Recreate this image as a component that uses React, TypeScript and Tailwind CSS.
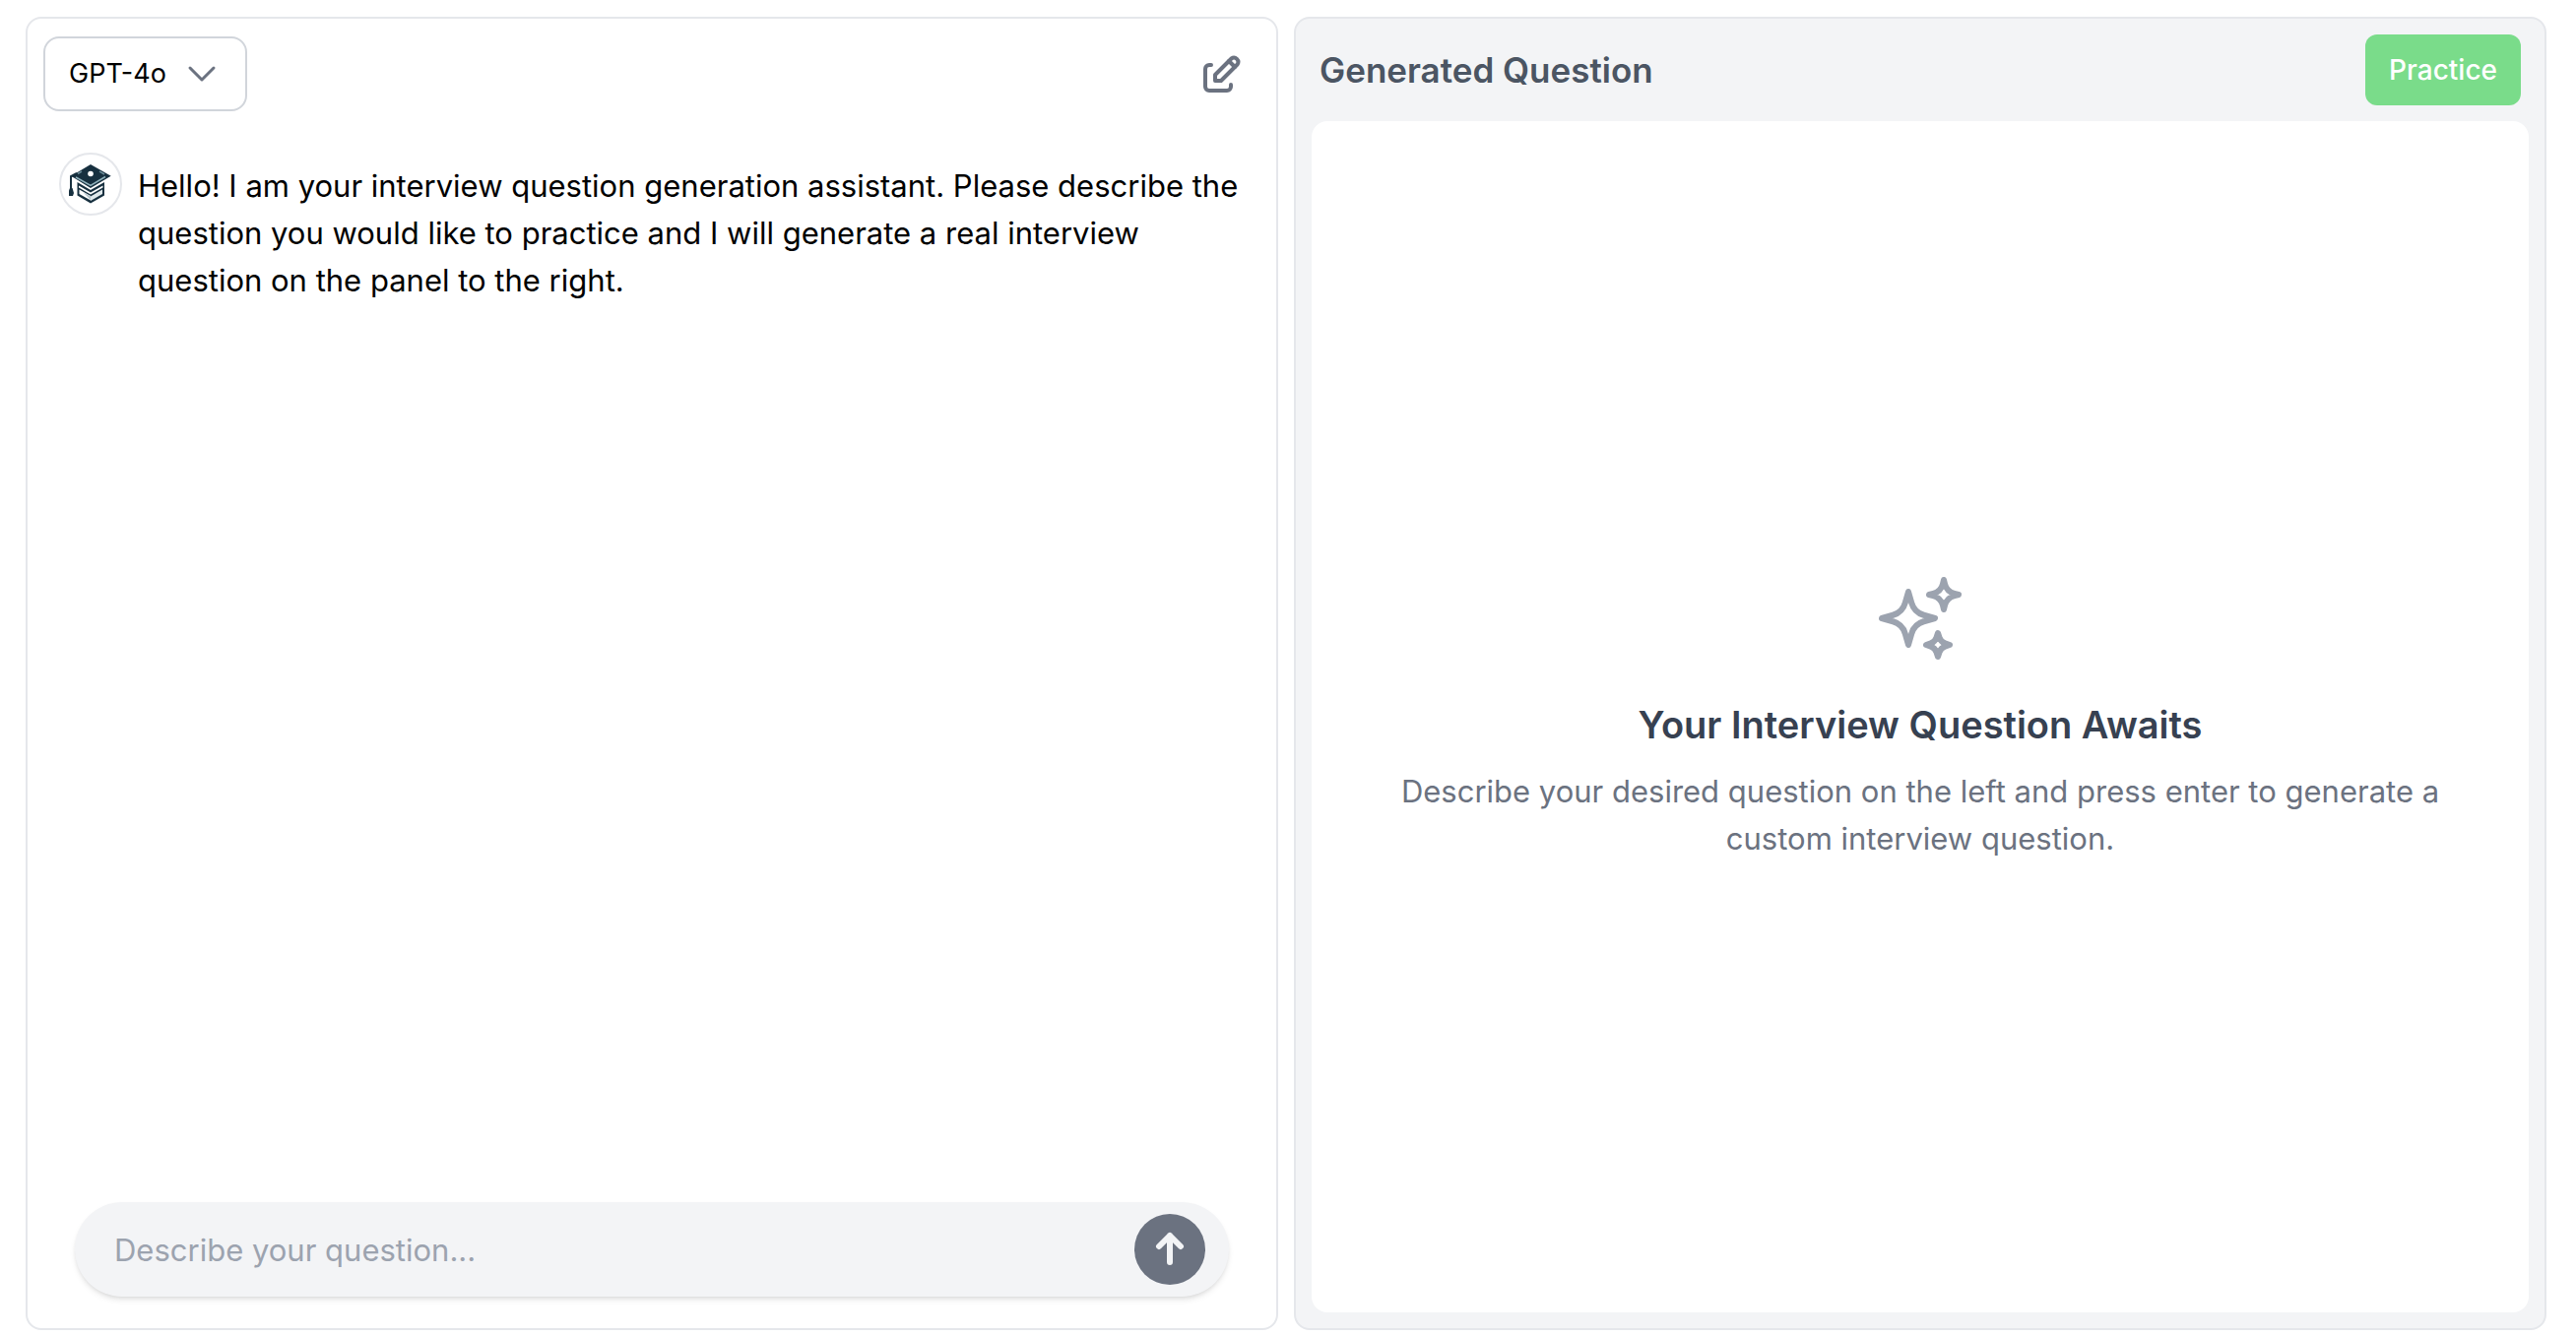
import { HiOutlineSparkles } from "react-icons/hi2";

function ChevronDown() {
  return (
    <svg width="32" height="32" viewBox="0 0 32 32" fill="none" stroke="#6b7280" strokeWidth="3" strokeLinecap="round" strokeLinejoin="round" aria-hidden="true">
      <path d="M4 10 L16 22 L28 10" />
    </svg>
  );
}

function EditIcon() {
  return (
    <svg width="38" height="38" viewBox="0 0 38 38" fill="none" stroke="#6b7280" strokeWidth="4" strokeLinecap="round" strokeLinejoin="round" aria-hidden="true">
      <path d="M8 10H6a4 4 0 0 0-4 4v18a4 4 0 0 0 4 4h18a4 4 0 0 0 4-4v-2" />
      <path d="M12 26v-6L28.500 3.500a4.300 4.300 0 0 1 6 6L18 26Z" />
      <path d="M26 6l6 6" />
    </svg>
  );
}

function CapLogo() {
  return (
    <svg width="44" height="40" viewBox="0 0 44 40" aria-hidden="true">
      <path d="M8.500 18l13.500 8 14-8v13.500L22 39.500 8.500 31.500z" fill="#17303f" />
      <path d="M10 21.500l12 7 12.500-7v2L22 30.500l-12-7z" fill="#ffffff" />
      <path d="M10.500 25.500L22 32v4.500l-11.500-6.500z" fill="#ffffff" />
      <path d="M34 25.500L22 32.500v4.500l12-7z" fill="#dfe8eb" />
      <path d="M14 28l8 4.500v3.500z" fill="#b4c5cc" />
      <path d="M22 0l20.700 11.800L22 24 5 13.500 2 12z" fill="#17303f" />
      <path d="M7 13L22 21.500 37 12.500" fill="none" stroke="#8fb0ba" strokeWidth="1.500" />
      <path d="M9 9.500l4-2.300M31 7.200l5 2.800" fill="none" stroke="#6d8d9a" strokeWidth="1.500" />
      <path d="M2 26V12l6-3" fill="none" stroke="#17303f" strokeWidth="2" />
      <path d="M1 24h2.500l1.500 5-1 3H0l-1-3z" fill="#17303f" />
      <circle cx="22" cy="9.500" r="2.800" fill="#ffffff" />
    </svg>
  );
}

function ArrowUp() {
  return (
    <svg width="40" height="40" viewBox="0 0 40 40" fill="none" stroke="#f3f4f6" strokeWidth="6" strokeLinecap="round" strokeLinejoin="round" aria-hidden="true">
      <path d="M20 33V6M9 17L20 6l11 11" />
    </svg>
  );
}

export default function App() {
  return (
    <main className="grid h-screen grid-cols-2 gap-4 bg-white pt-[17px] pr-[30px] pb-1.5 pl-[26px] font-['Inter',sans-serif] text-[31px] leading-[48px] text-black">
      <section className="flex flex-col rounded-2xl border-2 border-[#e5e7eb] bg-white">
        <header className="flex items-center justify-between pt-[18px] pr-9 pl-4">
          <button type="button" className="flex h-[76px] items-center gap-5 rounded-2xl border-2 border-[#d1d5db] pr-7 pl-6 text-[27px] leading-10">
            GPT-4o
            <ChevronDown />
          </button>
          <button type="button" aria-label="New conversation">
            <EditIcon />
          </button>
        </header>
        <div className="flex flex-1 items-start gap-4 px-8 pt-[42px]">
          <div className="flex size-16 shrink-0 items-center justify-center rounded-full border-2 border-[#e5e7eb]">
            <CapLogo />
          </div>
          <p className="pt-2.5">
            Hello! I am your interview question generation assistant. Please describe the question you would like to practice and I will generate a real interview question on the panel to the right.
          </p>
        </div>
        <form className="mx-12 mb-8 flex h-24 items-center rounded-full bg-[#f3f4f6] pr-6 pl-10 shadow-md" onSubmit={(e) => e.preventDefault()}>
          <input type="text" aria-label="Describe your question" placeholder="Describe your question..." className="min-w-0 flex-1 bg-transparent pt-0.5 outline-none placeholder:text-[#9ca3af]" />
          <button type="submit" aria-label="Send" className="flex size-[72px] items-center justify-center rounded-full bg-[#6b7280]">
            <ArrowUp />
          </button>
        </form>
      </section>
      <section className="flex flex-col gap-4 rounded-2xl border-2 border-[#e5e7eb] bg-[#f3f4f6] p-4">
        <header className="flex items-center justify-between px-2">
          <h1 className="text-[35px] leading-[56px] font-semibold text-[#4b5563]">Generated Question</h1>
          <button type="button" className="h-[72px] rounded-xl bg-[#7adc8a] px-6 text-[28px] leading-10 font-medium text-white">Practice</button>
        </header>
        <div className="flex flex-1 flex-col items-center justify-center rounded-2xl bg-white px-16 text-center">
          <HiOutlineSparkles className="mb-8 size-24 text-[#9ca3af]" aria-hidden="true" />
          <h2 className="mb-4 text-[38px] leading-[56px] font-semibold text-[#374151]">Your Interview Question Awaits</h2>
          <p className="text-[#6b7280]">Describe your desired question on the left and press enter to generate a custom interview question.</p>
        </div>
      </section>
    </main>
  );
}
